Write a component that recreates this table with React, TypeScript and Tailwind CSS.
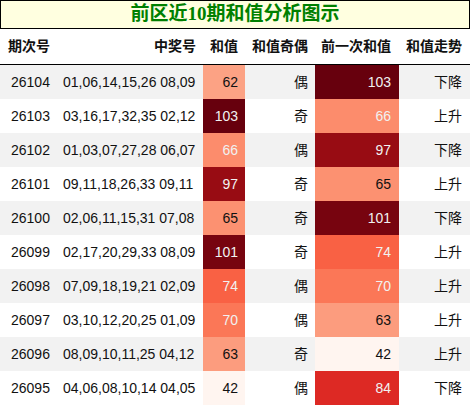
const rows = [
  { no: "26104", nums: "01,06,14,15,26 08,09", sum: 62, parity: "偶", prev: 103, trend: "下降" },
  { no: "26103", nums: "03,16,17,32,35 02,12", sum: 103, parity: "奇", prev: 66, trend: "上升" },
  { no: "26102", nums: "01,03,07,27,28 06,07", sum: 66, parity: "偶", prev: 97, trend: "下降" },
  { no: "26101", nums: "09,11,18,26,33 09,11", sum: 97, parity: "奇", prev: 65, trend: "上升" },
  { no: "26100", nums: "02,06,11,15,31 07,08", sum: 65, parity: "奇", prev: 101, trend: "下降" },
  { no: "26099", nums: "02,17,20,29,33 08,09", sum: 101, parity: "奇", prev: 74, trend: "上升" },
  { no: "26098", nums: "07,09,18,19,21 02,09", sum: 74, parity: "偶", prev: 70, trend: "上升" },
  { no: "26097", nums: "03,10,12,20,25 01,09", sum: 70, parity: "偶", prev: 63, trend: "上升" },
  { no: "26096", nums: "08,09,10,11,25 04,12", sum: 63, parity: "奇", prev: 42, trend: "上升" },
  { no: "26095", nums: "04,06,08,10,14 04,05", sum: 42, parity: "偶", prev: 84, trend: "下降" },
];

// Reds colormap, range 42..103
const heat: Record<number, string> = {
  42: "bg-[#fff5f0] text-[#111]",
  62: "bg-[#fca284] text-[#111]",
  63: "bg-[#fc9c7e] text-[#111]",
  65: "bg-[#fc9171] text-[#111]",
  66: "bg-[#fc8c6c] text-[#f1f1f1]",
  70: "bg-[#fb7757] text-[#f1f1f1]",
  74: "bg-[#f96144] text-[#f1f1f1]",
  84: "bg-[#dd2924] text-[#f1f1f1]",
  97: "bg-[#980c13] text-[#f1f1f1]",
  101: "bg-[#77040f] text-[#f1f1f1]",
  103: "bg-[#67000d] text-[#f1f1f1]",
};

const cols = "grid grid-cols-[56px_147px_42px_70px_84px_71px]";

export default function App() {
  return (
    <div
      className="w-[470px] bg-white text-[14px] text-[#111]"
      style={{ fontFamily: '"Liberation Sans", "Noto Sans CJK SC", sans-serif' }}
    >
      {/* Title */}
      <div
        className="h-[29px] border border-black bg-[#ffffe0] flex items-center justify-center text-[19px] font-bold text-[#008000]"
        style={{ fontFamily: '"Liberation Serif", "Noto Sans CJK SC", serif' }}
      >
        前区近10期和值分析图示
      </div>

      {/* Header */}
      <div className={`${cols} h-[36px] border-b border-black font-bold items-center`}>
        <div className="pl-2">期次号</div>
        <div className="text-right pr-[7px]">中奖号</div>
        <div className="text-right pr-[7px]">和值</div>
        <div className="text-right pr-[7px]">和值奇偶</div>
        <div className="text-right pr-[8px]">前一次和值</div>
        <div className="text-right pr-[8px]">和值走势</div>
      </div>

      {/* Rows */}
      {rows.map((r, i) => (
        <div key={r.no} className={`${cols} h-[34px] ${i % 2 === 0 ? "bg-[#f2f2f2]" : "bg-white"}`}>
          <div className="flex items-center pl-[11px]">{r.no}</div>
          <div className="flex items-center pl-[7px] whitespace-nowrap">{r.nums}</div>
          <div className={`flex items-center justify-end pr-[7px] ${heat[r.sum]}`}>{r.sum}</div>
          <div className="flex items-center justify-end pr-[7px]">{r.parity}</div>
          <div className={`flex items-center justify-end pr-[8px] ${heat[r.prev]}`}>{r.prev}</div>
          <div className="flex items-center justify-end pr-[8px]">{r.trend}</div>
        </div>
      ))}
    </div>
  );
}
